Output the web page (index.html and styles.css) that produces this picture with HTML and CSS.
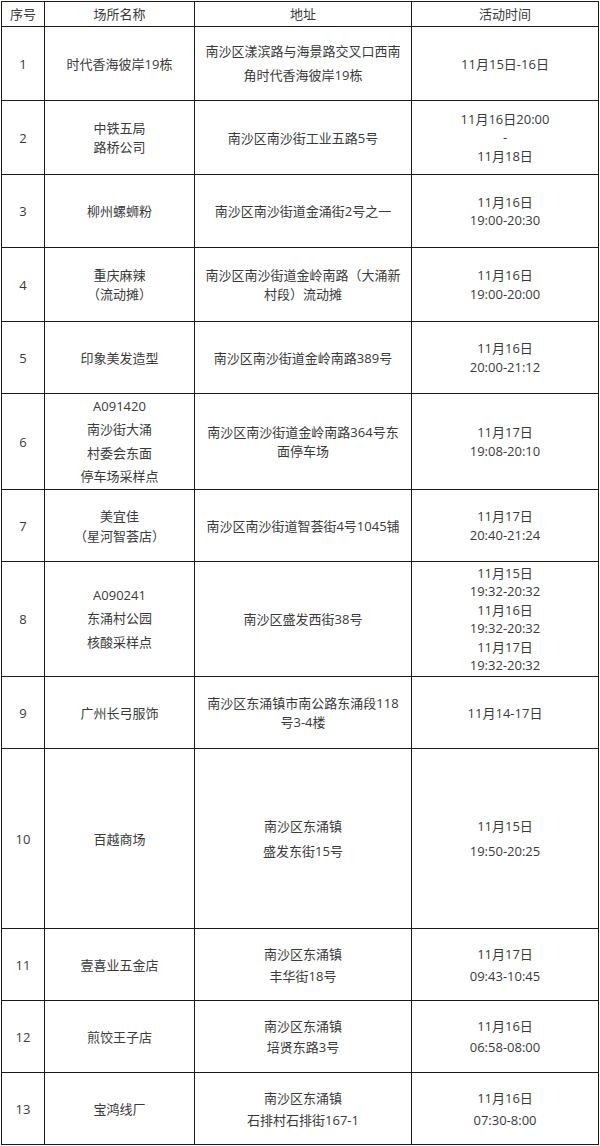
FILE: index.html
```html
<!DOCTYPE html>
<html lang="zh">
<head>
<meta charset="utf-8">
<title>场所列表</title>
<link rel="stylesheet" href="styles.css">
</head>
<body>
<table class="grid">
  <colgroup>
    <col class="c-no">
    <col class="c-name">
    <col class="c-addr">
    <col class="c-time">
  </colgroup>
  <thead>
    <tr class="h-head"><th>序号</th><th>场所名称</th><th>地址</th><th>活动时间</th></tr>
  </thead>
  <tbody>
    <tr class="h74"><td>1</td><td>时代香海彼岸19栋</td><td class="lh23">南沙区漾滨路与海景路交叉口西南<br>角时代香海彼岸19栋</td><td>11月15日-16日</td></tr>
    <tr class="h74"><td>2</td><td class="lh19">中铁五局<br>路桥公司</td><td>南沙区南沙街工业五路5号</td><td class="lh18">11月16日20:00<br>-<br>11月18日</td></tr>
    <tr class="h73"><td>3</td><td>柳州螺蛳粉</td><td>南沙区南沙街道金涌街2号之一</td><td class="lh18">11月16日<br>19:00-20:30</td></tr>
    <tr class="h74"><td>4</td><td class="lh19">重庆麻辣<br>（流动摊）</td><td class="lh19">南沙区南沙街道金岭南路（大涌新<br>村段）流动摊</td><td class="lh19">11月16日<br>19:00-20:00</td></tr>
    <tr class="h72"><td>5</td><td>印象美发造型</td><td>南沙区南沙街道金岭南路389号</td><td class="lh18">11月16日<br>20:00-21:12</td></tr>
    <tr class="h96"><td>6</td><td class="lh23">A091420<br>南沙街大涌<br>村委会东面<br>停车场采样点</td><td class="lh19">南沙区南沙街道金岭南路364号东<br>面停车场</td><td class="lh19">11月17日<br>19:08-20:10</td></tr>
    <tr class="h72"><td>7</td><td class="lh20">美宜佳<br>（星河智荟店）</td><td>南沙区南沙街道智荟街4号1045铺</td><td class="lh19">11月17日<br>20:40-21:24</td></tr>
    <tr class="h115"><td>8</td><td class="lh23">A090241<br>东涌村公园<br>核酸采样点</td><td>南沙区盛发西街38号</td><td class="lh18">11月15日<br>19:32-20:32<br>11月16日<br>19:32-20:32<br>11月17日<br>19:32-20:32</td></tr>
    <tr class="h72"><td>9</td><td>广州长弓服饰</td><td class="lh19">南沙区东涌镇市南公路东涌段118<br>号3-4楼</td><td>11月14-17日</td></tr>
    <tr class="h180"><td>10</td><td>百越商场</td><td class="lh25">南沙区东涌镇<br>盛发东街15号</td><td class="lh25">11月15日<br>19:50-20:25</td></tr>
    <tr class="h72"><td>11</td><td>壹喜业五金店</td><td class="lh22">南沙区东涌镇<br>丰华街18号</td><td class="lh22">11月17日<br>09:43-10:45</td></tr>
    <tr class="h72"><td>12</td><td>煎饺王子店</td><td class="lh21">南沙区东涌镇<br>培贤东路3号</td><td class="lh21">11月16日<br>06:58-08:00</td></tr>
    <tr class="h72"><td>13</td><td>宝鸿线厂</td><td class="lh22">南沙区东涌镇<br>石排村石排街167-1</td><td class="lh22">11月16日<br>07:30-8:00</td></tr>
  </tbody>
</table>
</body>
</html>
```

FILE: styles.css
```css
html, body {
  margin: 0;
  padding: 0;
  background: #ffffff;
}

body {
  padding: 1px 0 0 1px;
  font-family: "Open Sans", "Noto Sans CJK SC", sans-serif;
  font-size: 13px;
  color: #3a3a3a;
}

.grid {
  border-collapse: collapse;
  table-layout: fixed;
  width: 597px;
}

.c-no { width: 43px; }
.c-name { width: 150px; }
.c-addr { width: 217px; }
.c-time { width: 187px; }

.grid th,
.grid td {
  border: 1px solid #1a1a1a;
  padding: 0;
  text-align: center;
  vertical-align: middle;
  font-weight: normal;
  line-height: 18px;
  white-space: nowrap;
}

.h-head { height: 25px; }
.h72 { height: 72px; }
.h73 { height: 73px; }
.h74 { height: 74px; }
.h96 { height: 96px; }
.h115 { height: 115px; }
.h180 { height: 180px; }

.grid td.lh18 { line-height: 18.5px; }
.grid td.lh19 { line-height: 19px; }
.grid td.lh20 { line-height: 20px; }
.grid td.lh21 { line-height: 21px; }
.grid td.lh22 { line-height: 22px; }
.grid td.lh23 { line-height: 23.5px; }
.grid td.lh25 { line-height: 25px; }
```
